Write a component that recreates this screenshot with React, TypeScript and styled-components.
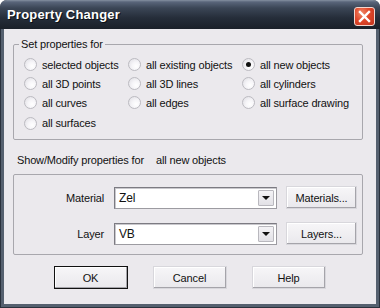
import React from 'react';
import styled, { createGlobalStyle } from 'styled-components';

const Global = createGlobalStyle`
  html, body { margin: 0; padding: 0; background: #ffffff; }
  body { font-family: "Liberation Sans", Arial, sans-serif; font-size: 11px; color: #111; letter-spacing: -0.15px; }
  * { box-sizing: border-box; }
`;

const Window = styled.div`
  width: 380px;
  height: 308px;
  display: flex;
  flex-direction: column;
  background: #2a323d;
  border-radius: 7px 7px 0 0;
  overflow: hidden;
`;

const TitleBar = styled.div`
  height: 29px;
  flex: none;
  display: flex;
  align-items: center;
  justify-content: space-between;
  padding: 0 4px 0 7px;
  background: linear-gradient(#8591a1 0px, #59657a 2px, #3b4656 8px, #252d39 18px, #1a2029 29px);
`;

const Title = styled.span`
  font-family: "Liberation Sans", Arial, sans-serif;
  font-weight: bold;
  font-size: 13px;
  color: #ffffff;
  text-shadow: 1px 1px 0 #0b0f15;
  letter-spacing: 0.2px;
`;

const CloseButton = styled.div`
  width: 21px;
  height: 19px;
  border-radius: 3px;
  border: 1px solid #f3d7cf;
  background: radial-gradient(circle at 35% 30%, #f08a6a 0%, #e0472a 45%, #c2341d 100%);
  display: flex;
  align-items: center;
  justify-content: center;
  margin-top: 3px;
  margin-right: 1px;
`;

const Frame = styled.div`
  flex: 1;
  display: flex;
  padding: 0 3px 3px 3px;
  background: #55606f;
  border-left: 1px solid #2a323d;
  border-right: 1px solid #2a323d;
  border-bottom: 1px solid #2a323d;
`;

const Body = styled.div`
  flex: 1;
  background: #ebe9ed;
  display: flex;
  flex-direction: column;
  padding: 9px 13px 0 9px;
`;

const Group = styled.fieldset<{ $padTop: number; $padBottom: number; $gapTop?: number }>`
  margin: ${p => p.$gapTop ?? 0}px 0 0 0;
  border: 1px solid #a8a7ad;
  border-radius: 2px;
  padding: ${p => p.$padTop}px 0 ${p => p.$padBottom}px 0;
  min-width: 0;
`;

const Legend = styled.legend`
  margin-left: 5px;
  padding: 0 2px;
  line-height: 13px;
`;

const RadioGrid = styled.div`
  display: grid;
  grid-template-columns: 104px 114px 1fr;
  grid-auto-rows: 19px;
  padding-left: 10px;
`;

const RadioItem = styled.label<{ $shift?: number }>`
  display: flex;
  align-items: center;
  gap: 5px;
  white-space: nowrap;
  margin-top: ${p => p.$shift ?? 0}px;
`;

const RadioCircle = styled.span<{ $checked?: boolean }>`
  width: 13px;
  height: 13px;
  flex: none;
  border-radius: 50%;
  border: 1px solid #bcbbc1;
  background: radial-gradient(circle at 65% 65%, #ffffff 0%, #f6f5f8 40%, #dddce2 100%);
  display: flex;
  align-items: center;
  justify-content: center;
  &::after {
    content: '';
    width: 5px;
    height: 5px;
    border-radius: 50%;
    background: ${p => (p.$checked ? '#111' : 'transparent')};
  }
`;

const InfoRow = styled.div`
  display: flex;
  padding-left: 4px;
  margin-top: 14px;
  line-height: 13px;
`;

const InfoLabel = styled.span`
  width: 139px;
`;

const FormGrid = styled.div`
  display: grid;
  grid-template-columns: 90px 163px 71px;
  column-gap: 10px;
  row-gap: 13px;
  align-items: center;
`;

const FieldLabel = styled.span`
  text-align: right;
`;

const Combo = styled.div`
  height: 22px;
  display: flex;
  align-items: stretch;
  background: #ffffff;
  border: 1px solid #9c9ba1;
  border-top-color: #7c7b82;
  border-left-color: #7c7b82;
  box-shadow: inset 1px 1px 0 #c9c8cd;
  padding: 2px;
`;

const ComboText = styled.span`
  flex: 1;
  display: flex;
  align-items: center;
  padding-left: 2px;
  font-size: 12px;
`;

const ComboArrow = styled.span`
  width: 16px;
  flex: none;
  background: linear-gradient(#f4f3f6, #e2e1e6);
  border: 1px solid #b9b8be;
  border-radius: 1px;
  display: flex;
  align-items: center;
  justify-content: center;
  &::after {
    content: '';
    border-left: 4px solid transparent;
    border-right: 4px solid transparent;
    border-top: 4px solid #111;
  }
`;

const Button = styled.button<{ $default?: boolean }>`
  height: 23px;
  padding: 0;
  font-family: "Liberation Sans", Arial, sans-serif;
  font-size: 11px;
  letter-spacing: -0.15px;
  color: #111;
  background: linear-gradient(#f7f6f8, #e9e8ec);
  border: 1px solid ${p => (p.$default ? '#111' : '#d8d7dc')};
  box-shadow: inset -1px -1px 0 #a5a4aa, inset 1px 1px 0 #ffffff;
  border-radius: 0;
`;

const SideButton = styled(Button)`
  width: 71px;
  margin-left: -1px;
`;

const ButtonRow = styled.div`
  display: flex;
  justify-content: center;
  gap: 25px;
  margin-top: 11px;
  padding-left: 3px;
`;

const DialogButton = styled(Button)`
  width: 74px;
`;

const options: { label: string; checked?: boolean; shift?: number }[] = [
  { label: 'selected objects' },
  { label: 'all existing objects' },
  { label: 'all new objects', checked: true },
  { label: 'all 3D points' },
  { label: 'all 3D lines' },
  { label: 'all cylinders' },
  { label: 'all curves' },
  { label: 'all edges' },
  { label: 'all surface drawing' },
  { label: 'all surfaces', shift: 3 },
];

export default function App() {
  return (
    <>
      <Global />
      <Window>
        <TitleBar>
          <Title>Property Changer</Title>
          <CloseButton>
            <svg width="13" height="13" viewBox="0 0 13 13">
              <path d="M2 2 L11 11 M11 2 L2 11" stroke="#ffffff" strokeWidth="2.4" strokeLinecap="square" />
            </svg>
          </CloseButton>
        </TitleBar>
        <Frame>
          <Body>
            <Group $padTop={4} $padBottom={8}>
              <Legend>Set properties for</Legend>
              <RadioGrid>
                {options.map(o => (
                  <RadioItem key={o.label} $shift={o.shift}>
                    <RadioCircle $checked={o.checked} />
                    {o.label}
                  </RadioItem>
                ))}
              </RadioGrid>
            </Group>
            <InfoRow>
              <InfoLabel>Show/Modify properties for</InfoLabel>
              <span>all new objects</span>
            </InfoRow>
            <Group $padTop={11} $padBottom={9} $gapTop={7}>
              <FormGrid>
                <FieldLabel>Material</FieldLabel>
                <Combo>
                  <ComboText>Zel</ComboText>
                  <ComboArrow />
                </Combo>
                <SideButton>Materials...</SideButton>
                <FieldLabel>Layer</FieldLabel>
                <Combo>
                  <ComboText>VB</ComboText>
                  <ComboArrow />
                </Combo>
                <SideButton>Layers...</SideButton>
              </FormGrid>
            </Group>
            <ButtonRow>
              <DialogButton $default>OK</DialogButton>
              <DialogButton>Cancel</DialogButton>
              <DialogButton>Help</DialogButton>
            </ButtonRow>
          </Body>
        </Frame>
      </Window>
    </>
  );
}
